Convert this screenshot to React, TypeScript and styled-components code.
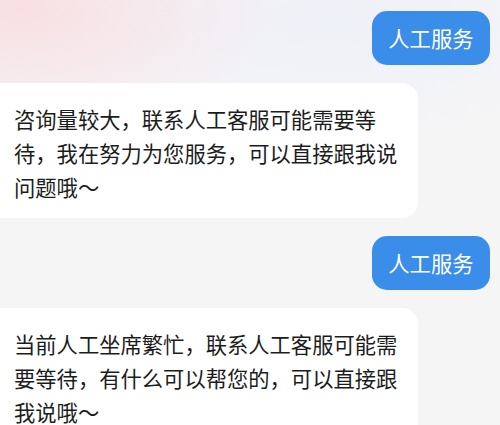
import React from "react";
import styled, { createGlobalStyle } from "styled-components";

const Global = createGlobalStyle`
  html, body {
    margin: 0;
    padding: 0;
    background: #f5f5f6;
  }
  body {
    font-family: "Noto Sans CJK SC", "Noto Sans", sans-serif;
    overflow: hidden;
  }
`;

const Screen = styled.div`
  width: 500px;
  height: 425px;
  overflow: hidden;
  box-sizing: border-box;
  padding-top: 11px;
  display: flex;
  flex-direction: column;
  gap: 18px;
  background:
    radial-gradient(ellipse 260px 130px at 20px 10px, rgba(248, 222, 226, 0.95), rgba(248, 222, 226, 0) 100%),
    radial-gradient(ellipse 300px 120px at 330px 20px, rgba(238, 240, 248, 0.9), rgba(238, 240, 248, 0) 100%),
    #f5f5f6;
`;

const Row = styled.div<{ $side: "left" | "right" }>`
  display: flex;
  justify-content: ${(p) => (p.$side === "right" ? "flex-end" : "flex-start")};
  padding-right: ${(p) => (p.$side === "right" ? "10px" : "0")};
`;

const UserBubble = styled.div`
  background: #3a8de9;
  color: #ffffff;
  font-size: 21.3px;
  line-height: 54px;
  height: 54px;
  padding: 0 16.5px;
  border-radius: 15px;
  white-space: nowrap;
`;

const BotBubble = styled.div`
  box-sizing: border-box;
  width: 438px;
  margin-left: -20px;
  background: #ffffff;
  color: #1c1c1c;
  font-size: 21.3px;
  line-height: 34px;
  padding: 19px 14px 14px 34px;
  border-radius: 16px;
`;

const messages: { side: "left" | "right"; text: string }[] = [
  { side: "right", text: "人工服务" },
  { side: "left", text: "咨询量较大，联系人工客服可能需要等待，我在努力为您服务，可以直接跟我说问题哦～" },
  { side: "right", text: "人工服务" },
  { side: "left", text: "当前人工坐席繁忙，联系人工客服可能需要等待，有什么可以帮您的，可以直接跟我说哦～" },
];

export default function App() {
  return (
    <>
      <Global />
      <Screen>
        {messages.map((m, i) => (
          <Row key={i} $side={m.side}>
            {m.side === "right" ? <UserBubble>{m.text}</UserBubble> : <BotBubble>{m.text}</BotBubble>}
          </Row>
        ))}
      </Screen>
    </>
  );
}
